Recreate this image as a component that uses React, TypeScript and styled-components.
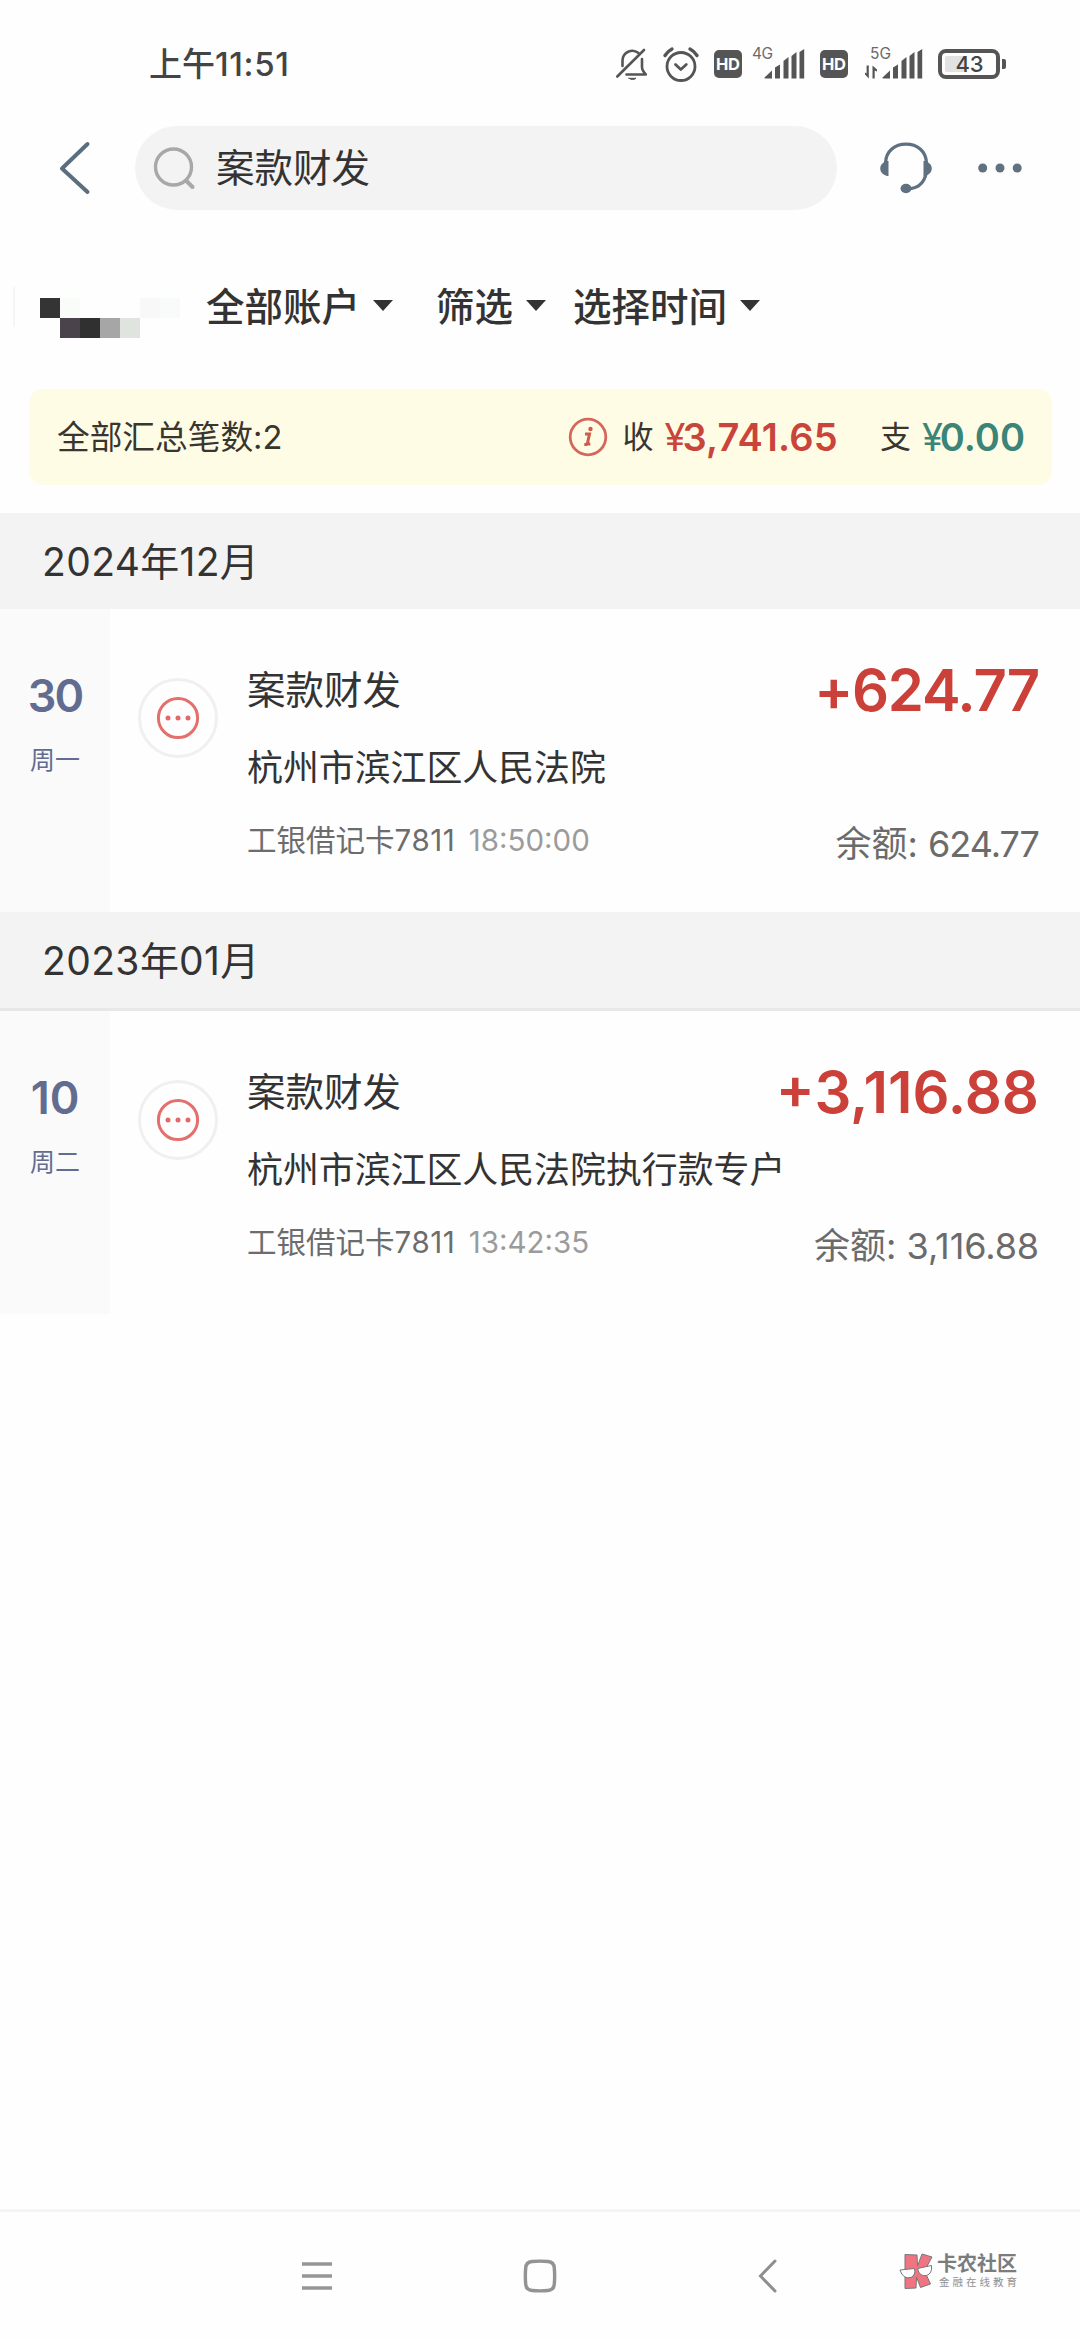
import React from "react";
import styled, { createGlobalStyle } from "styled-components";

const GlobalStyle = createGlobalStyle`
  * { box-sizing: border-box; }
  body {
    margin: 0;
    background: #fefefe;
    font-family: "Inter", "Noto Sans CJK SC", sans-serif;
    color: #333;
  }
`;

const Screen = styled.main`
  display: flex;
  flex-direction: column;
  width: 1080px;
  height: 2340px;
  overflow: hidden;
  background: #fefefe;
`;

const Digits = styled.span<{ $track?: number; $weight?: number }>`
  letter-spacing: ${(p) => p.$track ?? 0}px;
  font-weight: ${(p) => p.$weight ?? "inherit"};
`;

const StatusBar = styled.header`
  display: flex;
  align-items: center;
  justify-content: space-between;
  height: 126px;
  padding: 2px 74px 0 149px;
`;

const Clock = styled.div`
  font-size: 33px;
  line-height: 40px;
  font-weight: 500;
  color: #444;
`;

const StatusIcons = styled.div`
  display: flex;
  align-items: center;
  height: 40px;
`;

const StatusIcon = styled.svg<{ $gap?: number }>`
  flex: none;
  display: block;
  margin-left: ${(p) => p.$gap ?? 0}px;
  overflow: visible;
`;

const TopBar = styled.div`
  display: flex;
  align-items: center;
  height: 84px;
  padding: 0 58px;
`;

const IconButton = styled.button<{ $gap?: number }>`
  display: flex;
  flex: none;
  padding: 0;
  border: 0;
  background: none;
  margin-left: ${(p) => p.$gap ?? 0}px;
`;

const SearchBox = styled.div`
  display: flex;
  align-items: center;
  width: 702px;
  height: 84px;
  margin-left: 44px;
  padding-left: 17px;
  border-radius: 42px;
  background: #f3f3f3;
`;

const SearchText = styled.span`
  margin-left: 20px;
  font-size: 38.5px;
  line-height: 48px;
  color: #333;
`;

const FilterBar = styled.nav`
  display: flex;
  align-items: center;
  height: 179px;
  padding: 14px 0 0 13px;
`;

const FilterDivider = styled.i`
  width: 2px;
  height: 40px;
  background: #f6f6f6;
`;

const Mosaic = styled.div`
  display: grid;
  grid-template-columns: repeat(7, 20px);
  grid-template-rows: repeat(2, 20px);
  margin: 22px 26px 0 25px;
`;

const Pixel = styled.i<{ $tone: string }>`
  background: ${(p) => p.$tone};
`;

const Filter = styled.button<{ $gap?: number }>`
  display: flex;
  align-items: center;
  padding: 0;
  border: 0;
  background: none;
  margin-left: ${(p) => p.$gap ?? 0}px;
  font: 500 38.5px/48px "Inter", "Noto Sans CJK SC", sans-serif;
  color: #333;
`;

const Caret = styled.i`
  margin: 0 0 3px 13px;
  border: 10px solid transparent;
  border-top: 11px solid #333;
  border-bottom: 0;
`;

const Summary = styled.section`
  display: flex;
  align-items: center;
  height: 96px;
  margin: 0 28px 28px 29px;
  padding: 0 27px 0 28px;
  border-radius: 14px;
  background: #fffce6;
  font-size: 32.7px;
  line-height: 44px;
  color: #38362f;
`;

const SummaryCount = styled.span`
  flex: 1;
`;

const SummaryLabel = styled.span<{ $gap: number }>`
  margin-left: ${(p) => p.$gap}px;
  font-size: 31px;
`;

const SummaryValue = styled.span<{ $tone: string; $gap: number }>`
  margin-left: ${(p) => p.$gap}px;
  font-size: 38px;
  font-weight: 600;
  color: ${(p) => p.$tone};
`;

const MonthHeader = styled.h2<{ $ruled?: boolean }>`
  display: flex;
  align-items: center;
  height: ${(p) => (p.$ruled ? "99px" : "96px")};
  margin: 0;
  padding: 2px 0 0 42px;
  background: #f3f3f3;
  border-bottom: ${(p) => (p.$ruled ? "3px solid #e7e7e7" : "0")};
  font-size: 39px;
  line-height: 48px;
  font-weight: 400;
  color: #333;
`;

const Record = styled.article`
  display: flex;
  height: 303px;
`;

const DayColumn = styled.div`
  display: flex;
  flex-direction: column;
  align-items: center;
  width: 110px;
  padding-top: 62px;
  background: #fafafa;
  color: #626c90;
`;

const DayNumber = styled.strong`
  font-size: 45px;
  line-height: 50px;
  font-weight: 600;
`;

const Weekday = styled.span`
  margin-top: 21px;
  font-size: 25px;
  line-height: 36px;
`;

const TypeBadge = styled.div`
  display: flex;
  align-items: center;
  justify-content: center;
  width: 80px;
  height: 80px;
  margin: 69px 0 0 28px;
  border: 3px solid #f0f0f0;
  border-radius: 50%;
`;

const RecordBody = styled.div`
  flex: 1;
  display: flex;
  flex-direction: column;
  padding: 42px 41px 0 29px;
`;

const RecordLine = styled.div<{ $height: number }>`
  display: flex;
  align-items: center;
  justify-content: space-between;
  height: ${(p) => p.$height}px;
`;

const Title = styled.span`
  font-size: 38.5px;
  line-height: 48px;
`;

const Amount = styled.strong`
  font-size: 58px;
  line-height: 64px;
  font-weight: 600;
  color: #cb4038;
`;

const Party = styled.span`
  font-size: 35.900px;
  line-height: 48px;
`;

const Account = styled.span`
  font-size: 29.500px;
  line-height: 40px;
  color: #6c6c6c;
`;

const Time = styled.time`
  margin-left: 5px;
  color: #9b9b9b;
`;

const Balance = styled.span`
  padding-top: 8px;
  font-size: 36px;
  line-height: 44px;
  color: #6b6b6b;
`;

const SystemNav = styled.footer`
  display: flex;
  align-items: center;
  height: 131px;
  margin-top: auto;
  border-top: 3px solid #f4f4f4;
  padding: 0 62px 0 300px;
`;

const Brand = styled.div`
  display: flex;
  align-items: center;
  margin: -10px 0 0 122px;
`;

const BrandText = styled.div`
  display: flex;
  flex-direction: column;
  margin-left: 4px;
`;

const BrandName = styled.span`
  font-size: 20px;
  line-height: 22px;
  font-weight: 700;
  color: #7c7c7c;
`;

const BrandTagline = styled.span`
  margin: 1px 0 0 2px;
  font-size: 10.500px;
  line-height: 13px;
  letter-spacing: 3px;
  white-space: nowrap;
  color: #909090;
`;

const INK = "#555";

const BellOff = () => (
  <StatusIcon width="34" height="36" viewBox="0 0 34 36" fill="none" stroke={INK} strokeWidth="2.6" strokeLinecap="round" strokeLinejoin="round">
    <path d="M7.5 20V14.5a9.8 9.8 0 0 1 16-7.4M27 13v8c0 3 1.5 5 3.8 7.5H11.5" />
    <path d="M29 4 2.3 30.5" />
    <path d="M14 32.3h7c-2 1.6-5 1.6-7 0z" fill={INK} strokeWidth="1" />
  </StatusIcon>
);

const Alarm = () => (
  <StatusIcon $gap={14} width="36" height="36" viewBox="0 0 36 36" fill="none" stroke={INK} strokeWidth="2.8" strokeLinecap="round" strokeLinejoin="round">
    <circle cx="18" cy="20.5" r="14" />
    <path d="m12.5 18.5 5.3 5 5.5-5" />
    <path d="M2 9.5Q5 5 9 3M34 9.5Q31 5 27 3" strokeWidth="3.4" />
  </StatusIcon>
);

const Hd = ({ gap }: { gap: number }) => (
  <StatusIcon $gap={gap} width="28" height="28" viewBox="0 0 28 28">
    <rect width="28" height="28" rx="5" fill={INK} />
    <text x="14" y="20" textAnchor="middle" fontSize="16.5" fontWeight="700" fill="#fff" textLength="24">HD</text>
  </StatusIcon>
);

const Signal = ({ label, gap, data }: { label: string; gap: number; data?: boolean }) => (
  <StatusIcon $gap={gap} width="40" height="32" viewBox="0 0 40 32" fill={INK}>
    <text x="-12" y="10.5" fontSize="15.5" fill="#6a6a6a" textLength="21">{label}</text>
    {data && <path d="M-13.200 17.500V30.500L-17 26.500V24.500l1.600 1V17.500zM-9.500 30.500V17.500L-5 21.500V23.500l-2.300-1V30.500z" />}
    <path d="M.5 29.5 8 22.500v8H1.500Q0 30.500.5 29.500z" />
    <path d="M11 30.500V19.500l5-3v14zM19.500 30.500V13l5-4v21.500zM27.500 30.500V8l5-4v26.500zM35.500 30.500V4l4.700-3v29.500z" />
  </StatusIcon>
);

const Battery = () => (
  <StatusIcon $gap={16} width="68" height="30" viewBox="0 0 68 30">
    <rect x="2" y="2" width="58" height="26" rx="6" fill="none" stroke={INK} strokeWidth="4" />
    <rect x="7" y="7" width="20" height="16" rx="2" fill="#e2e2e2" />
    <path d="M64 10h2a2 2 0 0 1 2 2v6a2 2 0 0 1-2 2h-2z" fill={INK} />
    <text x="31.500" y="23" textAnchor="middle" fontSize="22" fontWeight="500" fill="#444">43</text>
  </StatusIcon>
);

const BackIcon = () => (
  <svg width="33" height="54" viewBox="0 0 33 54" fill="none" stroke="#5c6e7e" strokeWidth="4" strokeLinecap="round" strokeLinejoin="round">
    <path d="M29.500 3 4 27.500 29.500 51" />
  </svg>
);

const SearchIcon = () => (
  <svg width="44" height="46" viewBox="0 0 44 46" fill="none" stroke="#a8a8a8" strokeWidth="3.400" strokeLinecap="round">
    <circle cx="21.500" cy="22" r="18" />
    <path d="m34.500 36 6 6" strokeWidth="4" />
  </svg>
);

const HeadsetIcon = () => (
  <svg width="54" height="54" viewBox="0 0 54 54" fill="none" stroke="#5f7080">
    <path d="M6.500 22C7 10 16 3.200 27 3.200S47 10 47.500 22M47.200 32C45.500 40.500 40 47 30 47.800" strokeWidth="3.300" />
    <path d="M9.500 20H8Q1.200 22 1.200 27.500T8 35h1.500zM44.500 20H46Q52.800 22 52.800 27.500T46 35h-1.500z" fill="#5f7080" stroke="none" />
    <ellipse cx="27" cy="47.500" rx="5.500" ry="4.700" fill="#5f7080" stroke="none" />
  </svg>
);

const MoreIcon = () => (
  <svg width="44" height="10" viewBox="0 0 44 10" fill="#61717f">
    <circle cx="4.700" cy="5" r="4.500" />
    <circle cx="22" cy="5" r="4.500" />
    <circle cx="39.200" cy="5" r="4.500" />
  </svg>
);

const InfoIcon = () => (
  <svg width="40" height="40" viewBox="0 0 40 40">
    <circle cx="20" cy="20" r="17.800" fill="none" stroke="#d4685c" strokeWidth="2.800" />
    <path d="M17 17h4.500l-2.200 10h3M16.300 27.500h3" fill="none" stroke="#cf5a4e" strokeWidth="3" />
    <circle cx="22.500" cy="12" r="2.200" fill="#cf5a4e" />
  </svg>
);

const DotsIcon = () => (
  <svg width="44" height="44" viewBox="0 0 44 44" fill="#e26a66">
    <circle cx="22" cy="22" r="19.600" fill="none" stroke="#e3706d" strokeWidth="3" />
    <circle cx="12" cy="22" r="2.500" />
    <circle cx="22" cy="22" r="2.500" />
    <circle cx="32" cy="22" r="2.500" />
  </svg>
);

const RecentsIcon = () => (
  <svg width="34" height="34" viewBox="0 0 34 34" stroke="#969696" strokeWidth="3.400">
    <path d="M2 5h30M2 17h30M2 29h30" />
  </svg>
);

const HomeIcon = () => (
  <svg width="34" height="34" viewBox="0 0 34 34" fill="none" stroke="#939393" strokeWidth="3.400">
    <path d="M9 2.500Q17 1.800 25 2.500 31 3 31.300 9 32 17 31.300 25 31 31 25 31.500 17 32.200 9 31.500 3 31 2.700 25 2 17 2.700 9 3 3 9 2.500z" />
  </svg>
);

const NavBackIcon = () => (
  <svg width="20" height="34" viewBox="0 0 20 34" fill="none" stroke="#8e8e8e" strokeWidth="3" strokeLinecap="round">
    <path d="M18 2 3.500 17 18 32" />
  </svg>
);

const BrandLogo = () => (
  <svg width="34" height="36" viewBox="0 0 34 36" stroke="#777" strokeWidth="1" strokeLinejoin="round">
    <path d="M6 1.500 18 2 18.500 13 23 1 33 4 25.500 18 31.500 31 21.500 34.500 17.500 24 17 35 6 35.500z" fill="#f07582" />
    <path d="M1 17 15.500 15.500Q17 22 12 24.500 4 26.500 1 17zM18.500 15.500 32.500 12.500Q33.500 20.500 27.500 22.500 20.500 24 18.500 15.500z" fill="#fff" />
  </svg>
);

const CLEAR = "transparent";
const MOSAIC = [
  "#333433", "#fafcfa", CLEAR, CLEAR, CLEAR, "#f8f8f8", "#f9fafa",
  CLEAR, "#4a434c", "#303030", "#a6a6a6", "#dfe4df", CLEAR, CLEAR,
];

type Transaction = {
  year: string;
  month: string;
  day: string;
  weekday: string;
  amount: string;
  party: string;
  time: string;
  balance: string;
  tight: boolean;
};

const TRANSACTIONS: Transaction[] = [
  { year: "2024", month: "12", day: "30", weekday: "周一", amount: "+624.77", party: "杭州市滨江区人民法院", time: "18:50:00", balance: "624.77", tight: true },
  { year: "2023", month: "01", day: "10", weekday: "周二", amount: "+3,116.88", party: "杭州市滨江区人民法院执行款专户", time: "13:42:35", balance: "3,116.88", tight: false },
];

const TransactionGroup = ({ item, ruled }: { item: Transaction; ruled: boolean }) => (
  <section>
    <MonthHeader $ruled={ruled}>
      <Digits $track={0.4}>{item.year}</Digits>年<Digits $track={0.4}>{item.month}</Digits>月
    </MonthHeader>
    <Record>
      <DayColumn>
        <DayNumber><Digits $track={item.tight ? -2 : 0}>{item.day}</Digits></DayNumber>
        <Weekday>{item.weekday}</Weekday>
      </DayColumn>
      <TypeBadge><DotsIcon /></TypeBadge>
      <RecordBody>
        <RecordLine $height={78}>
          <Title>案款财发</Title>
          <Amount><Digits $track={item.tight ? -1.2 : 0}>{item.amount}</Digits></Amount>
        </RecordLine>
        <RecordLine $height={78}>
          <Party>{item.party}</Party>
        </RecordLine>
        <RecordLine $height={66}>
          <Account>
            工银借记卡<Digits $track={0.6}>7811</Digits>{" "}
            <Time>{item.time}</Time>
          </Account>
          <Balance>余额: <Digits $track={item.tight ? -1 : -0.1}>{item.balance}</Digits></Balance>
        </RecordLine>
      </RecordBody>
    </Record>
  </section>
);

export default function App() {
  return (
    <Screen>
      <GlobalStyle />
      <StatusBar>
        <Clock>上午<Digits $track={0.6}>11:51</Digits></Clock>
        <StatusIcons>
          <BellOff />
          <Alarm />
          <Hd gap={15} />
          <Signal label="4G" gap={22} />
          <Hd gap={16} />
          <Signal label="5G" gap={34} data />
          <Battery />
        </StatusIcons>
      </StatusBar>
      <TopBar>
        <IconButton aria-label="返回"><BackIcon /></IconButton>
        <SearchBox>
          <SearchIcon />
          <SearchText>案款财发</SearchText>
        </SearchBox>
        <IconButton $gap={42} aria-label="客服"><HeadsetIcon /></IconButton>
        <IconButton $gap={45} aria-label="更多"><MoreIcon /></IconButton>
      </TopBar>
      <FilterBar>
        <FilterDivider />
        <Mosaic>
          {MOSAIC.map((tone, i) => <Pixel key={i} $tone={tone} />)}
        </Mosaic>
        <Filter>全部账户<Caret /></Filter>
        <Filter $gap={43}>筛选<Caret /></Filter>
        <Filter $gap={27}>选择时间<Caret /></Filter>
      </FilterBar>
      <Summary>
        <SummaryCount>全部汇总笔数:<Digits $track={-1}>2</Digits></SummaryCount>
        <InfoIcon />
        <SummaryLabel $gap={15}>收</SummaryLabel>
        <SummaryValue $gap={11} $tone="#c9443a">
          <Digits $track={-3} $weight={400}>¥</Digits><Digits $track={0.2}>3,741.65</Digits>
        </SummaryValue>
        <SummaryLabel $gap={42}>支</SummaryLabel>
        <SummaryValue $gap={11} $tone="#3a8577">
          <Digits $track={-3} $weight={400}>¥</Digits><Digits>0.00</Digits>
        </SummaryValue>
      </Summary>
      {TRANSACTIONS.map((item, i) => (
        <TransactionGroup key={item.year} item={item} ruled={i > 0} />
      ))}
      <SystemNav>
        <IconButton aria-label="最近任务"><RecentsIcon /></IconButton>
        <IconButton $gap={189} aria-label="主页"><HomeIcon /></IconButton>
        <IconButton $gap={200} aria-label="返回"><NavBackIcon /></IconButton>
        <Brand>
          <BrandLogo />
          <BrandText>
            <BrandName>卡农社区</BrandName>
            <BrandTagline>金融在线教育</BrandTagline>
          </BrandText>
        </Brand>
      </SystemNav>
    </Screen>
  );
}
